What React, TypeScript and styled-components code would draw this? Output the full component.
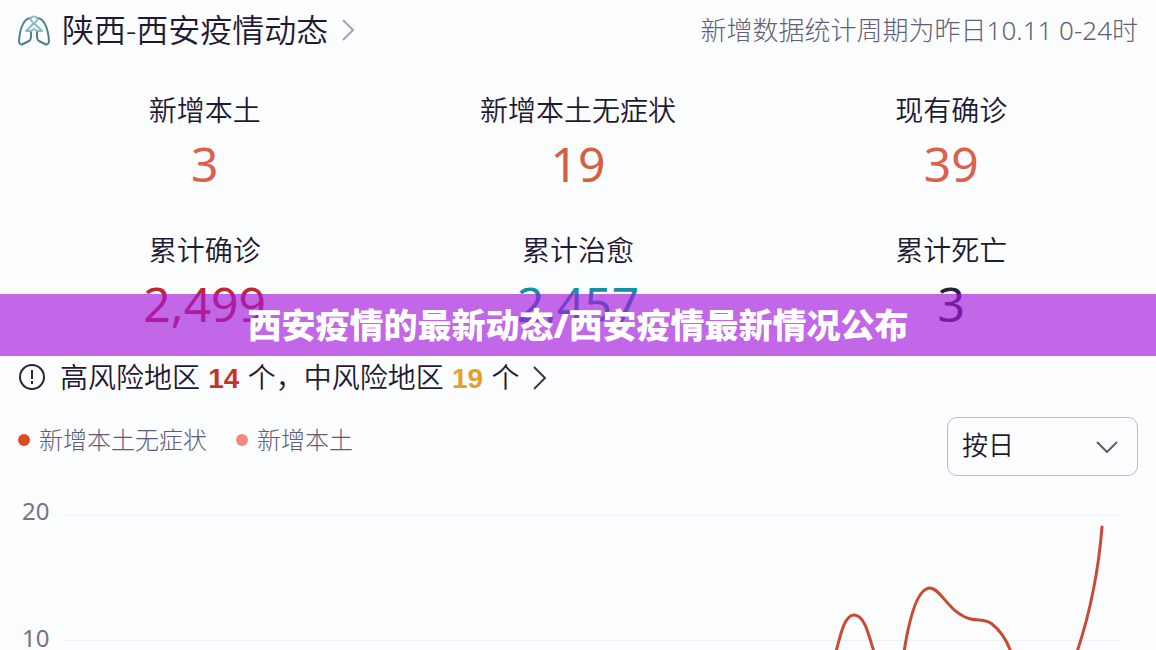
import React from "react";
import styled, { createGlobalStyle } from "styled-components";

const GlobalStyle = createGlobalStyle`
  * { box-sizing: border-box; }
  body {
    margin: 0;
    background: #fcfdff;
    color: #1f1a33;
    font-family: "Noto Sans", "Noto Sans CJK SC", sans-serif;
  }
`;

const Page = styled.main`
  position: relative;
  min-height: 100vh;
  padding: 0 18px;
  overflow: hidden;
`;

const Header = styled.header`
  display: flex;
  align-items: center;
  justify-content: space-between;
  height: 60px;
`;

const TitleLink = styled.a`
  display: flex;
  align-items: center;
  color: inherit;
  text-decoration: none;
`;

const Title = styled.h1`
  margin: 0 14px 0 12px;
  font-size: 32px;
  line-height: 40px;
  font-weight: 350;
`;

const Period = styled.p`
  margin: 0;
  font-size: 26px;
  line-height: 40px;
  font-weight: 300;
  color: #625d78;
`;

const Stats = styled.dl`
  display: grid;
  grid-template-columns: repeat(3, 1fr);
  row-gap: 32px;
  margin: 0;
  padding-top: 32px;
`;

const Stat = styled.div`
  text-align: center;
`;

const StatLabel = styled.dt`
  font-size: 28px;
  line-height: 36px;
  font-weight: 350;
`;

const StatValue = styled.dd<{ $color: string }>`
  margin: 0;
  font-size: 48px;
  line-height: 72px;
  font-weight: 400;
  color: ${(p) => p.$color};
`;

const RiskLink = styled.a`
  display: flex;
  align-items: center;
  margin-top: 17px;
  font-size: 28px;
  line-height: 40px;
  font-weight: 350;
  color: inherit;
  text-decoration: none;
`;

const RiskText = styled.span`
  margin: 0 14px;
`;

const RiskCount = styled.strong<{ $color: string }>`
  margin: 0 1px;
  font-family: "Liberation Sans", sans-serif;
  font-weight: 700;
  color: ${(p) => p.$color};
`;

const Toolbar = styled.div`
  display: flex;
  align-items: flex-start;
  justify-content: space-between;
  margin-top: 18px;
`;

const Legend = styled.ul`
  display: flex;
  gap: 29px;
  margin: 0;
  padding: 5px 0 0;
  list-style: none;
`;

const LegendItem = styled.li<{ $color: string }>`
  display: flex;
  align-items: center;
  gap: 9px;
  font-size: 24px;
  line-height: 36px;
  font-weight: 300;
  color: #5f5a78;

  &::before {
    content: "";
    width: 12px;
    height: 12px;
    border-radius: 50%;
    background: ${(p) => p.$color};
  }
`;

const SelectBox = styled.div`
  display: grid;
  align-items: center;
  width: 191px;
  height: 59px;

  & > * {
    grid-area: 1 / 1;
  }

  & > svg {
    justify-self: end;
    margin-right: 20px;
    pointer-events: none;
  }
`;

const Select = styled.select`
  appearance: none;
  width: 100%;
  height: 100%;
  padding: 0 14px 4px;
  border: 1px solid #bcbac8;
  border-radius: 10px;
  background: transparent;
  color: inherit;
  font-family: inherit;
  font-size: 26px;
  font-weight: 350;
`;

const Chart = styled.figure`
  display: grid;
  grid-template-columns: 44px 1fr;
  height: 155px;
  margin: 19px 18px 0 0;
`;

const Axis = styled.div`
  display: flex;
  flex-direction: column;
  gap: 96px;
  padding-left: 4px;
  font-size: 24px;
  line-height: 31px;
  font-weight: 400;
  color: #77728a;
`;

const Plot = styled.svg`
  display: block;
  width: 100%;
  height: 155px;
`;

const Banner = styled.div`
  position: absolute;
  top: 294px;
  left: 0;
  right: 0;
  padding: 10px 0;
  text-align: center;
  font-family: "Noto Sans", "Noto Sans CJK SC", sans-serif;
  font-size: 34px;
  line-height: 42px;
  font-weight: 900;
  color: #fff;
  background: rgba(163, 23, 220, 0.65);
`;

const stats = [
  { label: "新增本土", value: "3", color: "#dc604c" },
  { label: "新增本土无症状", value: "19", color: "#d55f43" },
  { label: "现有确诊", value: "39", color: "#dc604c" },
  { label: "累计确诊", value: "2,499", color: "#c4262e" },
  { label: "累计治愈", value: "2,457", color: "#1591a5" },
  { label: "累计死亡", value: "3", color: "#28263a" },
];

function LungsIcon() {
  return (
    <svg width="32" height="32" viewBox="0 0 32 32" fill="none" strokeLinecap="round" strokeLinejoin="round" aria-hidden="true">
      <path d="M13 4C7 4 2 12 1 27c0 3 2 4 4 3l6-3c2-1 2-3 2-5v-5" stroke="#4f7f8e" strokeWidth="2" />
      <path d="M19 4c6 0 11 8 12 23 0 3-2 4-4 3l-6-3c-2-1-2-3-2-5v-5" stroke="#4f7f8e" strokeWidth="2" />
      <path d="M13 4c1-2 5-2 6 0M12 5l4 5 4-5M16 9l-8 8h5M16 9l8 8h-5M13 17l3-2 3 2" stroke="#8bb9c4" strokeWidth="2" />
    </svg>
  );
}

export default function App() {
  return (
    <>
      <GlobalStyle />
      <Page>
        <Header>
          <TitleLink href="#city">
            <LungsIcon />
            <Title>陕西-西安疫情动态</Title>
            <svg width="12" height="22" viewBox="0 0 12 22" fill="none" stroke="#a5a3ad" strokeWidth="2" aria-hidden="true">
              <path d="M1 1l10 10L1 21" />
            </svg>
          </TitleLink>
          <Period>新增数据统计周期为昨日10.11 0-24时</Period>
        </Header>

        <Stats>
          {stats.map((s) => (
            <Stat key={s.label}>
              <StatLabel>{s.label}</StatLabel>
              <StatValue $color={s.color}>{s.value}</StatValue>
            </Stat>
          ))}
        </Stats>

        <RiskLink href="#risk">
          <svg width="28" height="28" viewBox="0 0 28 28" fill="none" stroke="#28233a" strokeWidth="2" aria-hidden="true">
            <circle cx="14" cy="13" r="12" />
            <path d="M14 6v9M14 17v3" />
          </svg>
          <RiskText>
            高风险地区 <RiskCount $color="#c8322d">14</RiskCount> 个，中风险地区{" "}
            <RiskCount $color="#e5a02c">19</RiskCount> 个
          </RiskText>
          <svg width="14" height="24" viewBox="0 0 14 24" fill="none" stroke="#3b3748" strokeWidth="2" aria-hidden="true">
            <path d="M1 1l11 11L1 23" />
          </svg>
        </RiskLink>

        <Toolbar>
          <Legend>
            <LegendItem $color="#e04a22">新增本土无症状</LegendItem>
            <LegendItem $color="#f2897a">新增本土</LegendItem>
          </Legend>
          <SelectBox>
            <Select aria-label="统计周期" defaultValue="day">
              <option value="day">按日</option>
            </Select>
            <svg width="22" height="12" viewBox="0 0 22 12" fill="none" stroke="#5c5f6b" strokeWidth="2" aria-hidden="true">
              <path d="M1 1l10 10L21 1" />
            </svg>
          </SelectBox>
        </Toolbar>

        <Chart>
          <Axis>
            <span>20</span>
            <span>10</span>
          </Axis>
          <Plot viewBox="62 495 1058 155" preserveAspectRatio="none" fill="none" aria-hidden="true">
            <path d="M62 515H1120M62 640.500H1120" stroke="#edf0f6" strokeWidth="1" vectorEffect="non-scaling-stroke" />
            <path
              d="M836 652C841 632 845 615 854 615C864 615 868 632 874 652M904 652C909 620 917 588 930 588C941 588 949 614 971 619C979 621 986 619 992 624C1001 631 1007 641 1011 652M1077 652C1091 610 1099 565 1102 527"
              stroke="#c94a31"
              strokeWidth="3"
              strokeLinecap="round"
              vectorEffect="non-scaling-stroke"
            />
          </Plot>
        </Chart>

        <Banner>西安疫情的最新动态/西安疫情最新情况公布</Banner>
      </Page>
    </>
  );
}
